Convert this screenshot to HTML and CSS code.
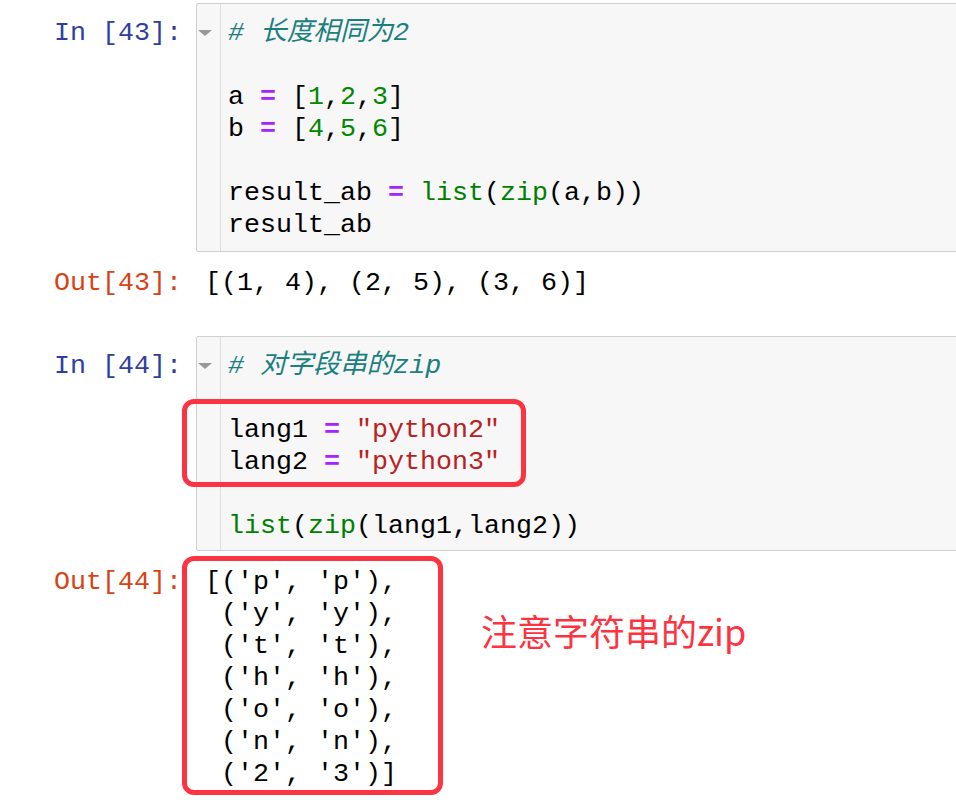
FILE: index.html
```html
<!DOCTYPE html>
<html lang="zh">
<head>
<meta charset="utf-8">
<title>zip</title>
<link rel="stylesheet" href="styles.css">
</head>
<body>
<div class="nb">
  <div class="row row-in first">
    <div class="prompt p-in">In [43]:</div>
    <div class="input">
      <div class="gutter"><span class="fold"></span></div>
<pre class="code"><span class="c"># 长度相同为2</span>

a <span class="o">=</span> [<span class="n">1</span>,<span class="n">2</span>,<span class="n">3</span>]
b <span class="o">=</span> [<span class="n">4</span>,<span class="n">5</span>,<span class="n">6</span>]

result_ab <span class="o">=</span> <span class="b">list</span>(<span class="b">zip</span>(a,b))
result_ab</pre>
    </div>
  </div>
  <div class="row row-out">
    <div class="prompt p-out">Out[43]:</div>
<pre class="output">[(1, 4), (2, 5), (3, 6)]</pre>
  </div>

  <div class="row row-in second">
    <div class="prompt p-in">In [44]:</div>
    <div class="input">
      <div class="gutter"><span class="fold"></span></div>
<pre class="code"><span class="c"># 对字段串的zip</span>

lang1 <span class="o">=</span> <span class="s">"python2"</span>
lang2 <span class="o">=</span> <span class="s">"python3"</span>

<span class="b">list</span>(<span class="b">zip</span>(lang1,lang2))</pre>
    </div>
  </div>
  <div class="row row-out">
    <div class="prompt p-out">Out[44]:</div>
<pre class="output">[('p', 'p'),
 ('y', 'y'),
 ('t', 't'),
 ('h', 'h'),
 ('o', 'o'),
 ('n', 'n'),
 ('2', '3')]</pre>
  </div>

  <div class="mark mark-a"></div>
  <div class="mark mark-b"></div>
  <div class="note">注意字符串的zip</div>
</div>
</body>
</html>
```

FILE: styles.css
```css
html, body {
  margin: 0;
  padding: 0;
  background: #ffffff;
  overflow: hidden;
}

.nb {
  position: relative;
  width: 980px;
  height: 812px;
  font-family: "Liberation Mono", "Noto Sans CJK SC", monospace;
  font-size: 26.67px;
  line-height: 32px;
  color: #000;
}

.row {
  display: flex;
  align-items: flex-start;
}

.row-in.first { margin-top: 3px; }
.row-in.second { margin-top: 37px; }
.row-out { margin-top: 15px; }

.prompt {
  flex: 0 0 196px;
  box-sizing: border-box;
  padding-right: 14px;
  text-align: right;
  white-space: pre;
}

.row-in .prompt { padding-top: 14px; }
.p-in { color: #303f9f; }
.p-out { color: #d84315; }

.input {
  flex: 1;
  display: flex;
  background: #f7f7f7;
  border: 1px solid #cfcfcf;
  border-radius: 2px;
}

.gutter {
  flex: 0 0 23px;
  border-right: 1px solid #dddddd;
  position: relative;
}

.fold {
  position: absolute;
  left: 1px;
  top: 26px;
  width: 0;
  height: 0;
  border-left: 7px solid transparent;
  border-right: 7px solid transparent;
  border-top: 6px solid #999999;
}

.code {
  margin: 0;
  padding: 13px 0 10px 7px;
  font: inherit;
  line-height: 32px;
  white-space: pre;
}

.second .code { padding-bottom: 8px; }

.output {
  margin: 0;
  padding-left: 9px;
  font: inherit;
  line-height: 32px;
  white-space: pre;
}

.c { color: #1a7f7f; font-style: italic; }
.o { color: #aa22ff; font-weight: bold; }
.n { color: #008800; }
.b { color: #008000; }
.s { color: #ba2121; }

.mark {
  position: absolute;
  box-sizing: border-box;
  border: 5px solid #fc3341;
  border-radius: 12px;
}

.mark-a {
  left: 182px;
  top: 396px;
  width: 344px;
  height: 88px;
}

.mark-b {
  left: 182px;
  top: 553px;
  width: 261px;
  height: 239px;
}

.note {
  position: absolute;
  left: 481px;
  top: 605px;
  font-family: "Noto Sans CJK SC", "Noto Sans", sans-serif;
  font-size: 36px;
  line-height: 44px;
  color: #fc3341;
}
```
